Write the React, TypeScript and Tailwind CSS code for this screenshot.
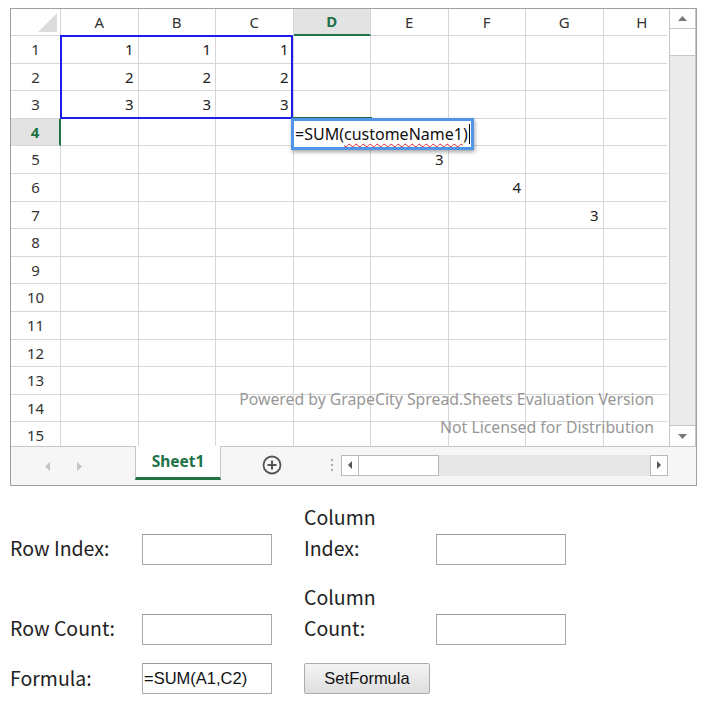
import React from 'react';

const cols = ['A', 'B', 'C', 'D', 'E', 'F', 'G', 'H'];
const rows = Array.from({ length: 15 }, (_, i) => i + 1);

// row -> column -> value
const values: Record<number, Record<string, string>> = {
  1: { A: '1', B: '1', C: '1' },
  2: { A: '2', B: '2', C: '2' },
  3: { A: '3', B: '3', C: '3' },
  5: { E: '3' },
  6: { F: '4' },
  7: { G: '3' },
};

const sheetFont = { fontFamily: '"Noto Sans", "Open Sans", sans-serif' };
const formFont = { fontFamily: '"Noto Sans CJK KR", "Noto Sans", sans-serif' };
const arialFont = { fontFamily: '"Liberation Sans", Arial, sans-serif' };

function Grid() {
  return (
    <div className="relative w-[656px] h-[437px] overflow-hidden bg-white text-[#333]" style={sheetFont}>
      {/* column header */}
      <div className="flex h-[27px]">
        <div className="relative w-[50px] shrink-0 border-r border-b border-[#d6d6d6]">
          <svg className="absolute right-[3px] bottom-[3px]" width="19" height="19" viewBox="0 0 19 19">
            <polygon points="19,0 19,19 0,19" fill="#dcdcdc" />
          </svg>
        </div>
        {cols.map((c) => (
          <div
            key={c}
            className={`w-[77.5px] shrink-0 flex items-center justify-center text-[15px] border-r border-[#d6d6d6] ${
              c === 'D' ? 'bg-[#e3e3e3] text-[#217346] font-bold border-b-2 border-b-[#217346]' : 'border-b'
            }`}
          >
            {c}
          </div>
        ))}
      </div>

      {rows.map((r) => (
        <div key={r} className="flex h-[27.6px]">
          <div
            className={`w-[50px] shrink-0 flex items-center justify-center text-[15px] border-b border-[#d6d6d6] ${
              r === 4 ? 'bg-[#e3e3e3] text-[#217346] font-bold border-r-2 border-r-[#217346]' : 'border-r'
            }`}
          >
            {r}
          </div>
          {cols.map((c) => (
            <div
              key={c}
              className="w-[77.5px] shrink-0 flex items-center justify-end pr-[4px] text-[15px] text-[#222] border-r border-b border-[#d6d6d6]"
            >
              {values[r]?.[c] ?? ''}
            </div>
          ))}
        </div>
      ))}

      {/* selection A1:C3 */}
      <div className="absolute left-[49px] top-[26px] w-[233px] h-[84px] border-2 border-[#1c1cf0]" />
      {/* active cell D4 */}
      <div className="absolute left-[281px] top-[108px] w-[80px] h-[30px] border-2 border-[#217346]" />

      {/* cell editor */}
      <div className="absolute left-[280px] top-[109px] w-[183px] h-[32px] bg-white border-[3px] border-[#4f94e6] shadow-[1px_2px_4px_rgba(0,0,0,0.35)] flex items-center pl-[1px] text-[16px] text-[#111] leading-none">
        <span>=SUM(</span>
        <span className="underline decoration-wavy decoration-[#e02020] decoration-1 underline-offset-[3px]">customeName1</span>
        <span>)</span>
        <span className="inline-block w-px h-[20px] bg-black ml-px" />
      </div>

      {/* watermark */}
      <div className="absolute right-[13px] top-[377px] text-right text-[15.8px] leading-[27.5px] text-[#979797]">
        <div>Powered by GrapeCity Spread.Sheets Evaluation Version</div>
        <div>Not Licensed for Distribution</div>
      </div>
    </div>
  );
}

function VScroll() {
  return (
    <div className="ml-[2px] w-[27px] h-[437px] border-x border-[#c6c6c6] bg-[#ebebeb] flex flex-col justify-between">
      <div>
        <div className="h-[20px] bg-white border-b border-[#c6c6c6] flex items-center justify-center">
          <svg width="9" height="5" viewBox="0 0 9 5"><polygon points="0,5 9,5 4.5,0" fill="#777" /></svg>
        </div>
        <div className="h-[27px] bg-white border-b border-[#c6c6c6]" />
      </div>
      <div className="h-[21px] bg-white border-t border-[#c6c6c6] flex items-center justify-center">
        <svg width="9" height="5" viewBox="0 0 9 5"><polygon points="0,0 9,0 4.5,5" fill="#777" /></svg>
      </div>
    </div>
  );
}

function TabBar() {
  return (
    <div className="flex items-stretch h-[39px] border-t border-[#c6c6c6] bg-[#f6f6f6]" style={sheetFont}>
      <div className="w-[124px] flex items-center pl-[34px] gap-[27px]">
        <svg width="5" height="9" viewBox="0 0 5 9"><polygon points="5,0 5,9 0,4.5" fill="#c4c4c4" /></svg>
        <svg width="5" height="9" viewBox="0 0 5 9"><polygon points="0,0 0,9 5,4.5" fill="#c4c4c4" /></svg>
      </div>
      <div className="-mt-px w-[86px] h-[34px] bg-white border-x border-[#c6c6c6] border-b-[3px] border-b-[#217346] flex items-center justify-center text-[15.5px] font-bold text-[#217346]">
        Sheet1
      </div>
      <div className="w-[102px] flex items-center justify-center">
        <svg width="20" height="20" viewBox="0 0 20 20" className="-mt-[2px]">
          <circle cx="10" cy="10" r="8.5" fill="none" stroke="#555" strokeWidth="1.8" />
          <path d="M10 5.5v9M5.5 10h9" stroke="#555" strokeWidth="2" />
        </svg>
      </div>
      <div className="w-[18px] flex flex-col items-center justify-center gap-[3px] -mt-[2px]">
        <span className="w-[2px] h-[2px] bg-[#aaa]" />
        <span className="w-[2px] h-[2px] bg-[#aaa]" />
        <span className="w-[2px] h-[2px] bg-[#aaa]" />
      </div>
      <div className="flex items-center -mt-[2px]">
        <div className="w-[327px] h-[21px] bg-[#e7e7e7] flex">
          <div className="w-[18px] bg-white border border-[#b9b9b9] flex items-center justify-center">
            <svg width="4" height="8" viewBox="0 0 4 8"><polygon points="4,0 4,8 0,4" fill="#555" /></svg>
          </div>
          <div className="w-[80px] bg-white border-y border-r border-[#b9b9b9]" />
          <div className="flex-1" />
          <div className="w-[18px] bg-white border border-[#b9b9b9] flex items-center justify-center">
            <svg width="4" height="8" viewBox="0 0 4 8"><polygon points="0,0 0,8 4,4" fill="#555" /></svg>
          </div>
        </div>
      </div>
    </div>
  );
}

function TextBox({ value = '' }: { value?: string }) {
  return (
    <div
      className="w-[130px] h-[31px] shrink-0 bg-white border border-[#a9a9a9] border-t-[#9a9a9a] flex items-center pl-[1px] text-[16.5px] text-[#111]"
      style={arialFont}
    >
      {value}
    </div>
  );
}

function Label({ children, w = 132 }: { children: React.ReactNode; w?: number }) {
  return (
    <div className="shrink-0 text-[19.5px] leading-[31px] text-[#222] mb-[2px]" style={{ ...formFont, width: w }}>
      {children}
    </div>
  );
}

export default function App() {
  return (
    <div className="w-[708px] h-[708px] bg-white pt-[8px] pl-[10px]">
      <div className="w-[687px] border border-[#a0a0a0]">
        <div className="flex">
          <Grid />
          <VScroll />
        </div>
        <TabBar />
      </div>

      <div className="mt-[15px] flex flex-col">
        <div className="flex items-end">
          <Label>Row Index:</Label>
          <TextBox />
          <div className="w-[32px] shrink-0" />
          <Label>
            Column
            <br />
            Index:
          </Label>
          <TextBox />
        </div>

        <div className="mt-[16px] flex items-end">
          <Label>Row Count:</Label>
          <TextBox />
          <div className="w-[32px] shrink-0" />
          <Label>
            Column
            <br />
            Count:
          </Label>
          <TextBox />
        </div>

        <div className="mt-[17px] flex items-center">
          <Label>Formula:</Label>
          <TextBox value="=SUM(A1,C2)" />
          <div className="w-[32px] shrink-0" />
          <button
            className="w-[126px] h-[31px] rounded-[2px] border border-[#acacac] bg-gradient-to-b from-[#f4f4f4] to-[#dedede] text-[16.5px] text-[#111]"
            style={arialFont}
          >
            SetFormula
          </button>
        </div>
      </div>
    </div>
  );
}
